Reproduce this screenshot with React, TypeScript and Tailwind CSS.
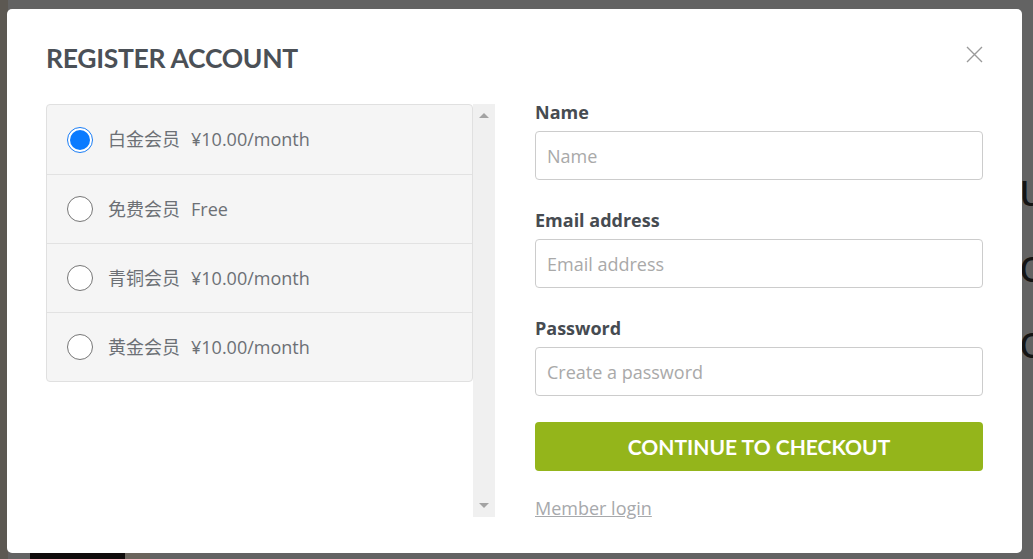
import React from "react";

const plans = [
  { name: "白金会员", price: "¥10.00/month", checked: true },
  { name: "免费会员", price: "Free", checked: false },
  { name: "青铜会员", price: "¥10.00/month", checked: false },
  { name: "黄金会员", price: "¥10.00/month", checked: false },
];

const fields = [
  { label: "Name", placeholder: "Name", type: "text" },
  { label: "Email address", placeholder: "Email address", type: "email" },
  { label: "Password", placeholder: "Create a password", type: "password" },
];

function Radio({ checked }: { checked: boolean }) {
  if (checked) {
    return (
      <span className="flex h-[26px] w-[26px] shrink-0 items-center justify-center rounded-full border border-[#1a7df5] bg-white">
        <span className="h-[20px] w-[20px] rounded-full bg-[#0a7bff]" />
      </span>
    );
  }
  return <span className="h-[26px] w-[26px] shrink-0 rounded-full border border-[#767676] bg-white" />;
}

function PlanRow({ name, price, checked, first }: { name: string; price: string; checked: boolean; first: boolean }) {
  return (
    <label
      className={`flex h-[69px] cursor-pointer items-center gap-[15px] pl-[20px] ${first ? "" : "border-t border-[#e2e2e2]"}`}
    >
      <Radio checked={checked} />
      <span className="text-[18px] text-[#6c7075]">
        {name}
        <span className="ml-[11px]">{price}</span>
      </span>
    </label>
  );
}

function FakeScrollbar() {
  return (
    <div className="flex h-[413px] w-[22px] shrink-0 flex-col items-center justify-between bg-[#f0f0f0] py-[9px]">
      <span className="h-0 w-0 border-x-[5px] border-b-[5px] border-x-transparent border-b-[#a3a3a3]" />
      <span className="h-0 w-0 border-x-[5px] border-t-[5px] border-x-transparent border-t-[#a3a3a3]" />
    </div>
  );
}

export default function App() {
  return (
    <div
      className="relative h-[559px] w-[1033px] overflow-hidden bg-[#636363]"
      style={{ fontFamily: '"Open Sans", "Noto Sans CJK SC", sans-serif' }}
    >
      {/* page behind the overlay */}
      <div className="absolute left-[1019px] top-[150px] flex flex-col text-[46px] leading-[76px] text-[#141414]">
        <span>u</span>
        <span>c</span>
        <span>c</span>
      </div>
      <div className="absolute bottom-0 left-0 h-full w-[8px] bg-[#5c5852]" />
      <div className="absolute bottom-0 left-[30px] h-[8px] w-[95px] bg-[#0f0c0c]" />
      <div className="absolute bottom-0 left-[125px] h-[8px] w-[25px] bg-[#6a645c]" />

      {/* modal */}
      <div className="absolute left-[7px] top-[9px] h-[544px] w-[1015px] rounded-[5px] bg-white px-[39px]">
        <div className="flex h-[91px] items-start justify-between pt-[33px]">
          <h1
            className="text-[26.5px] font-bold leading-[32px] tracking-[-0.3px] text-[#4b5056]"
            style={{ fontFamily: "Lato, sans-serif" }}
          >
            REGISTER ACCOUNT
          </h1>
          <button className="mt-[4px] text-[#9a9a9a]" aria-label="Close">
            <svg width="17" height="17" viewBox="0 0 17 17" fill="none" stroke="currentColor" strokeWidth="1.4">
              <path d="M1 1L16 16M16 1L1 16" />
            </svg>
          </button>
        </div>

        <div className="flex gap-[40px]">
          <div className="flex w-[449px] items-start pt-[4px]">
            <div className="flex-1 overflow-hidden rounded-[4px] border border-[#e0e0e0] bg-[#f5f5f5]">
              {plans.map((p, i) => (
                <PlanRow key={p.name} name={p.name} price={p.price} checked={p.checked} first={i === 0} />
              ))}
            </div>
            <FakeScrollbar />
          </div>

          <div className="flex w-[448px] flex-col">
            {fields.map((f, i) => (
              <div key={f.label} className={i === 0 ? "" : "mt-[28px]"}>
                <div className="mb-[7px] text-[18px] font-bold leading-[24px] text-[#464b51]">{f.label}</div>
                <input
                  type={f.type}
                  placeholder={f.placeholder}
                  className="block h-[49px] w-full rounded-[4px] border border-[#cccccc] px-[11px] text-[18px] text-[#555] outline-none placeholder:text-[#a9a9a9]"
                />
              </div>
            ))}
            <button
              className="mt-[26px] h-[49px] w-full rounded-[4px] bg-[#94b51b] text-[21px] font-bold text-white"
              style={{ fontFamily: "Lato, sans-serif" }}
            >
              CONTINUE TO CHECKOUT
            </button>
            <a href="#" className="mt-[25px] self-start text-[18px] leading-[24px] text-[#a7a9ac] underline">
              Member login
            </a>
          </div>
        </div>
      </div>
    </div>
  );
}
